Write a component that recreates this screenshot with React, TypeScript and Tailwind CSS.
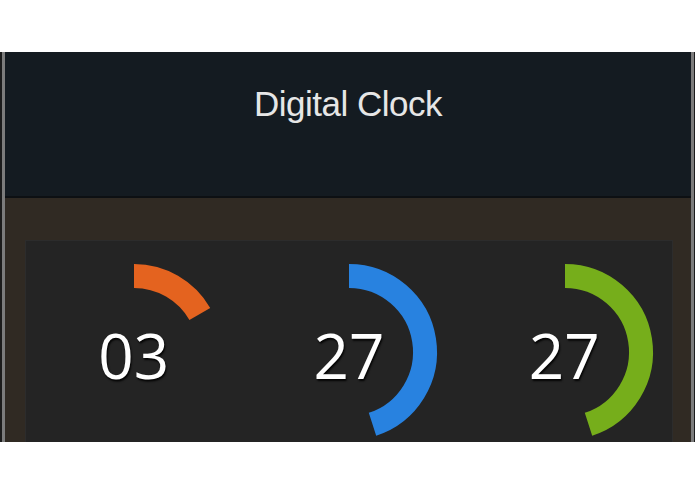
import React from 'react';

type Dial = { value: string; frac: number; color: string };

const dials: Dial[] = [
  { value: '03', frac: 60 / 360, color: '#e4631f' },
  { value: '27', frac: 27 / 60, color: '#2882e0' },
  { value: '27', frac: 27 / 60, color: '#76ae1b' },
];

const arcPath = (cx: number, cy: number, r: number, frac: number) => {
  const a = frac * Math.PI * 2;
  const x = cx + r * Math.sin(a);
  const y = cy - r * Math.cos(a);
  const large = frac > 0.5 ? 1 : 0;
  return `M ${cx} ${cy - r} A ${r} ${r} 0 ${large} 1 ${x.toFixed(2)} ${y.toFixed(2)}`;
};

const Ring: React.FC<Dial> = ({ value, frac, color }) => (
  <div className="relative h-[240px]">
    <svg className="absolute inset-0" width="216" height="240" viewBox="0 0 216 240">
      <path d={arcPath(108, 111, 76, frac)} fill="none" stroke={color} strokeWidth={24} />
    </svg>
    <div className="absolute left-0 right-0 top-[79px] text-center text-[62px] leading-[70px] text-white font-['Open_Sans',sans-serif] [text-shadow:1px_2px_2px_rgba(0,0,0,0.9)]">
      {value}
    </div>
  </div>
);

export default function App() {
  return (
    <div className="w-[695px] h-[494px] bg-white overflow-hidden">
      <div className="mt-[52px] h-[390px] bg-[#1c1c1c] pl-[2px] pr-[1px]">
        <div className="h-full border-x-[3px] border-[#7c7c7c] flex flex-col overflow-hidden">
          <div className="h-[146px] shrink-0 bg-[#141b21] border-b-2 border-[#0d1013] flex items-center justify-center">
            <h1 className="text-[35px] text-[#e6e6e6] font-['Liberation_Sans',Arial,sans-serif] -mt-[40px] tracking-[-0.5px]">
              Digital Clock
            </h1>
          </div>
          <div className="flex-1 bg-[#302a23] pl-[20px] pr-[18px] pt-[42px]">
            <div className="h-[300px] bg-[#242424] border border-[#2c2c2c] grid grid-cols-3">
              {dials.map((d, i) => (
                <Ring key={i} {...d} />
              ))}
            </div>
          </div>
        </div>
      </div>
    </div>
  );
}
